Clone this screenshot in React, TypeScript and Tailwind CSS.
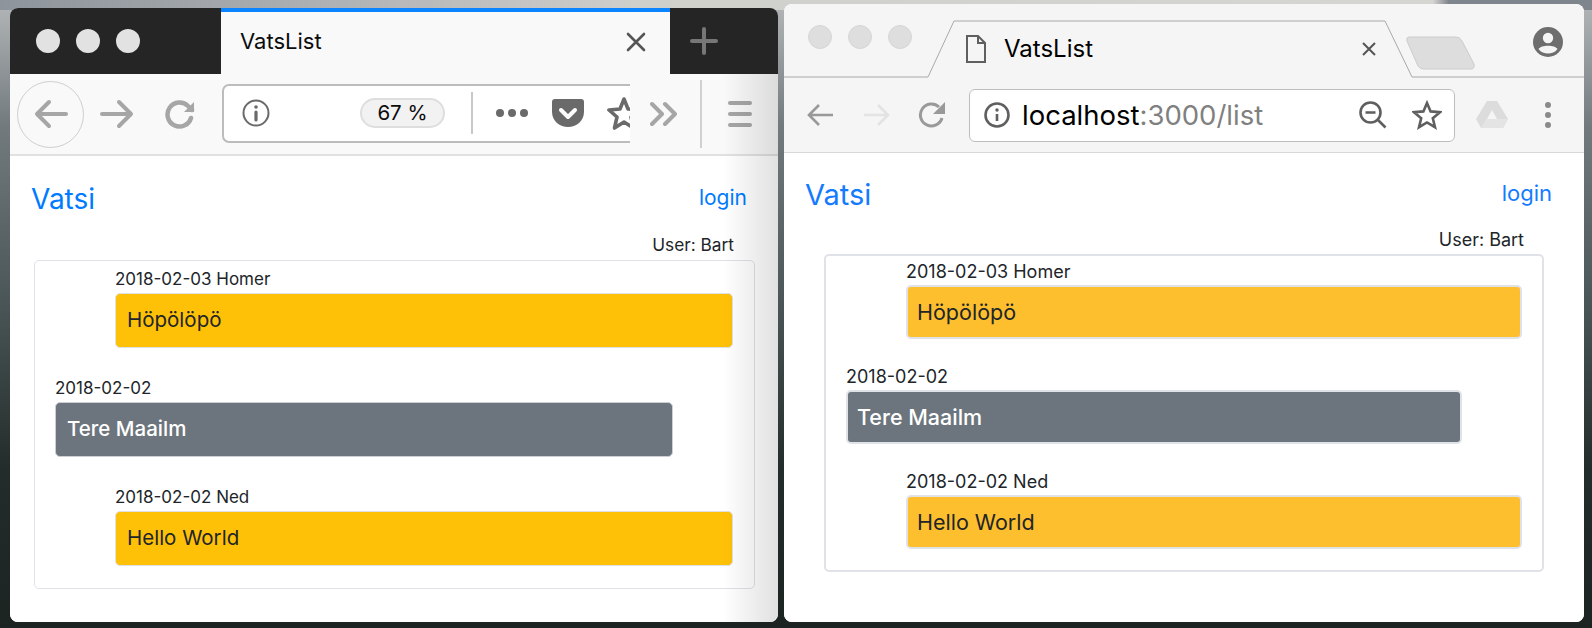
import React from "react";

const FONT = "[font-family:Inter,'Liberation_Sans',sans-serif]";

function Row({ label, text, kind }: { label: string; text: string; kind: string }) {
  const styles: Record<string, { wrap: string; label: string; box: string }> = {
    ffOwn: { wrap: "self-start ml-[60px] w-[618px]", label: "text-[17px] h-[27px]", box: "h-[55px] bg-[#ffc107] border-[#dfe1e6] border text-[#212529] text-[20.5px] px-[11px]" },
    ffOther: { wrap: "self-start w-[618px]", label: "text-[17px] h-[27px]", box: "h-[55px] bg-[#6c757d] border-[#ccd0d5] border text-white text-[20.5px] px-[11px] font-medium" },
    gcOwn: { wrap: "self-start ml-[60px] w-[616px]", label: "text-[18px] h-[26px]", box: "h-[54px] bg-[#fdbf2d] border-[#dfe2e7] border-2 text-[#212529] text-[21.5px] px-[9px]" },
    gcOther: { wrap: "self-start w-[616px]", label: "text-[18px] h-[26px]", box: "h-[54px] bg-[#6c757d] border-[#dfe2e7] border-2 text-white text-[21.5px] px-[9px] font-medium" },
  };
  const s = styles[kind];
  return (
    <div className={s.wrap}>
      <div className={`${s.label} leading-[26px] text-[#212529] whitespace-nowrap`}>{label}</div>
      <div className={`${s.box} flex items-center rounded-[5px]`}>{text}</div>
    </div>
  );
}

function FirefoxWindow() {
  return (
    <div className="relative w-[768px] h-[614px] mt-[8px] flex-none flex flex-col rounded-[8px] overflow-hidden bg-white">
      {/* tab strip */}
      <div className="flex h-[66px] flex-none bg-[#252525]">
        <div className="w-[211px] flex-none flex items-center gap-[16px] pl-[26px]">
          <span className="w-[24px] h-[24px] rounded-full bg-[#e2e2e2]" />
          <span className="w-[24px] h-[24px] rounded-full bg-[#e2e2e2]" />
          <span className="w-[24px] h-[24px] rounded-full bg-[#e2e2e2]" />
        </div>
        <div className="w-[449px] flex-none flex items-center justify-between bg-[#f9f9fa] border-t-[4px] border-[#0a84ff] pl-[19px] pr-[24px] pb-[3px]">
          <span className="text-[22px] text-[#0c0c0d]">VatsList</span>
          <svg width="20" height="20" viewBox="0 0 20 20" fill="none" stroke="#555" strokeWidth="2.6" strokeLinecap="round">
            <path d="M2 2 L18 18 M18 2 L2 18" />
          </svg>
        </div>
        <div className="flex-1 flex items-center pl-[20px]">
          <svg width="28" height="28" viewBox="0 0 28 28" fill="none" stroke="#777" strokeWidth="4" strokeLinecap="round">
            <path d="M14 2 V26 M2 14 H26" />
          </svg>
        </div>
      </div>
      {/* toolbar */}
      <div className="relative flex-none h-[82px] flex items-center bg-[#f9f9fa] border-b-2 border-[#e1e1e2] overflow-hidden pl-[7px]">
        <div className="w-[67px] h-[67px] flex-none rounded-full border-[1.5px] border-[#cfcfcf] flex items-center justify-center">
          <svg width="34" height="30" viewBox="0 0 34 30" fill="none" stroke="#a6a6a6" strokeWidth="4" strokeLinecap="round" strokeLinejoin="round">
            <path d="M32 15 H3 M15 3 L3 15 L15 27" />
          </svg>
        </div>
        <svg className="ml-[16px] flex-none" width="34" height="30" viewBox="0 0 34 30" fill="none" stroke="#a6a6a6" strokeWidth="4" strokeLinecap="round" strokeLinejoin="round">
          <path d="M2 15 H31 M19 3 L31 15 L19 27" />
        </svg>
        <svg className="ml-[30px] flex-none" width="32" height="30" viewBox="0 0 32 30" fill="none" stroke="#a6a6a6" strokeWidth="4.5" strokeLinecap="round" strokeLinejoin="round">
          <path d="M27 19 A12 12 0 1 1 24 7 L28 11" />
          <path d="M30 3 V13 H20 Z" fill="#a6a6a6" stroke="none" />
        </svg>
        <div className="ml-[26px] mb-[2px] h-[59px] w-[500px] flex-none flex items-center bg-white border-2 border-[#bcbcbc] rounded-[7px] pl-[18px]">
          <svg className="flex-none" width="28" height="28" viewBox="0 0 28 28" fill="none" stroke="#6a6a6a">
            <circle cx="14" cy="14" r="12.5" strokeWidth="2" />
            <path d="M14 13 V21" strokeWidth="3.2" strokeLinecap="round" />
            <circle cx="14" cy="8" r="1.8" fill="#6a6a6a" stroke="none" />
          </svg>
          <div className="ml-[90px] w-[85px] h-[30px] flex-none flex items-center justify-center rounded-full bg-[#f2f2f2] border-2 border-[#dedede] text-[20.5px] text-[#0c0c0d]">67 %</div>
          <div className="ml-[26px] w-[2px] h-[42px] flex-none bg-[#c8c8c8]" />
          <div className="ml-[23px] flex flex-none gap-[4px]">
            <span className="w-[8px] h-[8px] rounded-full bg-[#6a6a6a]" />
            <span className="w-[8px] h-[8px] rounded-full bg-[#6a6a6a]" />
            <span className="w-[8px] h-[8px] rounded-full bg-[#6a6a6a]" />
          </div>
          <svg className="ml-[24px] flex-none" width="32" height="28" viewBox="0 0 32 28">
            <path d="M3 0 H29 A3 3 0 0 1 32 3 V13 C32 22 24 28 16 28 C8 28 0 22 0 13 V3 A3 3 0 0 1 3 0 Z" fill="#6a6a6a" />
            <path d="M9 11 L16 18 L23 11" fill="none" stroke="#fff" strokeWidth="4" strokeLinecap="round" strokeLinejoin="round" />
          </svg>
          <svg className="ml-[22px] flex-none" width="36" height="34" viewBox="0 0 36 34" fill="none" stroke="#6a6a6a" strokeWidth="3.6" strokeLinejoin="round">
            <path d="M18 3 L22 13 L33 14 L25 21 L27.5 32 L18 26 L8.5 32 L11 21 L3 14 L14 13 Z" />
          </svg>
        </div>
        {/* overflow panel over the url bar */}
        <div className="absolute right-0 top-0 bottom-0 w-[148px] flex items-center bg-[#f9f9fa]">
          <svg className="ml-[20px] flex-none" width="28" height="26" viewBox="0 0 28 26" fill="none" stroke="#a6a6a6" strokeWidth="4" strokeLinecap="round" strokeLinejoin="round">
            <path d="M2 3 L12 13 L2 23 M15 3 L25 13 L15 23" />
          </svg>
          <div className="ml-[22px] w-[2px] h-[68px] flex-none bg-[#d0d0d0]" />
          <div className="ml-[26px] flex flex-col gap-[7px] flex-none">
            <span className="w-[24px] h-[4px] rounded-full bg-[#a6a6a6]" />
            <span className="w-[24px] h-[4px] rounded-full bg-[#a6a6a6]" />
            <span className="w-[24px] h-[4px] rounded-full bg-[#a6a6a6]" />
          </div>
        </div>
      </div>
      {/* page */}
      <div className="flex-1 flex flex-col bg-white">
        <div className="flex items-start justify-between pl-[21px] pr-[31px] pt-[24px]">
          <span className="text-[28px] leading-[38px] text-[#007bff]">Vatsi</span>
          <span className="text-[21px] leading-[36px] text-[#007bff]">login</span>
        </div>
        <div className="mt-[15px] pr-[44px] text-right text-[17.3px] leading-[24px] text-[#212529]">User: Bart</div>
        <div className="mx-[24px] mt-[3px] w-[721px] h-[329px] flex flex-col gap-[27px] border border-[#dfe1e6] rounded-[5px] pl-[20px] pt-[5px]">
          <Row kind="ffOwn" label="2018-02-03 Homer" text="Höpölöpö" />
          <Row kind="ffOther" label="2018-02-02" text="Tere Maailm" />
          <Row kind="ffOwn" label="2018-02-02 Ned" text="Hello World" />
        </div>
      </div>
      {/* right edge shade */}
      <div className="absolute right-0 top-[66px] bottom-0 w-[55px] pointer-events-none bg-gradient-to-r from-transparent to-black/12" />
    </div>
  );
}

function ChromeWindow() {
  return (
    <div className="w-[800px] h-[618px] mt-[4px] ml-[6px] flex-none flex flex-col rounded-[8px] overflow-hidden bg-white">
      {/* tab strip */}
      <div className="relative flex-none h-[74px] flex items-center bg-[#f5f5f5] pb-[2px]">
        <svg className="absolute left-0 top-0" width="800" height="74" fill="none">
          <path d="M0 73 H144 L170 17 H601 L628 73 H800" stroke="#a9a9a9" strokeWidth="1" />
          <path d="M625 33 H672 Q676 33 678 37 L690 60 Q691 65 687 65 H639 Q636 65 634 62 L623 37 Q622 33 625 33 Z" fill="#dddddd" stroke="#cccccc" />
        </svg>
        <div className="relative flex items-center gap-[16px] pl-[24px] pb-[6px]">
          <span className="w-[24px] h-[24px] rounded-full bg-[#dedede] border border-[#d6d6d6]" />
          <span className="w-[24px] h-[24px] rounded-full bg-[#dedede] border border-[#d6d6d6]" />
          <span className="w-[24px] h-[24px] rounded-full bg-[#dedede] border border-[#d6d6d6]" />
        </div>
        <div className="relative ml-[54px] mt-[18px] flex items-center">
          <svg className="flex-none" width="20" height="28" viewBox="0 0 20 28" fill="none" stroke="#5f5f5f" strokeWidth="2">
            <path d="M1 1 H12 L19 8 V27 H1 Z M12 1 V8 H19" />
          </svg>
          <span className="ml-[18px] w-[358px] flex-none text-[24px] leading-[28px] text-black">VatsList</span>
          <svg className="flex-none" width="14" height="14" viewBox="0 0 14 14" fill="none" stroke="#555" strokeWidth="2">
            <path d="M1 1 L13 13 M13 1 L1 13" />
          </svg>
        </div>
        <svg className="absolute left-[749px] top-[23px]" width="30" height="30" viewBox="0 0 30 30">
          <circle cx="15" cy="15" r="15" fill="#6e6e6e" />
          <circle cx="15" cy="11" r="5.2" fill="#f5f5f5" />
          <path d="M5.5 22 C8 17.5 22 17.5 24.5 22 C22 25.5 18.5 26.5 15 26.5 C11.5 26.5 8 25.5 5.5 22 Z" fill="#f5f5f5" />
        </svg>
      </div>
      {/* toolbar */}
      <div className="flex-none h-[75px] flex items-center bg-[#f5f5f5] border-b border-[#d8d8d8] pl-[23px]">
        <svg className="flex-none" width="26" height="24" viewBox="0 0 26 24" fill="none" stroke="#999" strokeWidth="2.6">
          <path d="M26 12 H2 M12 2 L2 12 L12 22" />
        </svg>
        <svg className="ml-[31px] flex-none" width="26" height="24" viewBox="0 0 26 24" fill="none" stroke="#e3e3e3" strokeWidth="2.6">
          <path d="M0 12 H24 M14 2 L24 12 L14 22" />
        </svg>
        <svg className="ml-[28px] flex-none" width="28" height="28" viewBox="0 0 28 28" fill="none" stroke="#999" strokeWidth="3">
          <path d="M24 17 A11 11 0 1 1 21 6" />
          <path d="M27 1 V13 H15 Z" fill="#999" stroke="none" />
        </svg>
        <div className="ml-[23px] h-[53px] w-[486px] flex-none flex items-center bg-white border border-[#bdbdbd] rounded-[6px] pl-[14px]">
          <svg className="flex-none" width="26" height="26" viewBox="0 0 26 26" fill="none" stroke="#5f5f5f">
            <circle cx="13" cy="13" r="11.5" strokeWidth="2.6" />
            <path d="M13 12 V19" strokeWidth="2.6" />
            <circle cx="13" cy="8" r="1.7" fill="#5f5f5f" stroke="none" />
          </svg>
          <span className="ml-[12px] w-[335px] flex-none text-[27.5px] leading-[30px] text-black whitespace-nowrap">
            localhost<span className="text-[#808080]">:3000/list</span>
          </span>
          <svg className="flex-none ml-[2px]" width="28" height="28" viewBox="0 0 28 28" fill="none" stroke="#5f5f5f" strokeWidth="2.6">
            <circle cx="11.5" cy="11.5" r="10" />
            <path d="M6.5 11.5 H16.5 M18.5 18.5 L26.5 26.5" />
          </svg>
          <svg className="ml-[25px] flex-none" width="30" height="30" viewBox="0 0 30 30" fill="none" stroke="#5f5f5f" strokeWidth="2.6" strokeLinejoin="miter">
            <path d="M15 3 L18.6 11.4 L28 12.2 L20.8 18.2 L23 27.2 L15 22.4 L7 27.2 L9.2 18.2 L2 12.2 L11.4 11.4 Z" />
          </svg>
        </div>
        <svg className="ml-[21px] flex-none" width="32" height="28" viewBox="0 0 32 28">
          <path d="M11 0 H21 L32 18 L27 27 H5 L0 18 Z" fill="#dcdcdc" />
          <path d="M5 27 L10 18 H32 L27 27 Z" fill="#e4e4e4" />
          <path d="M16 9 L11 18 H21 Z" fill="#f5f5f5" />
        </svg>
        <div className="ml-[37px] flex flex-col gap-[4px] flex-none">
          <span className="w-[6px] h-[6px] rounded-full bg-[#8a8a8a]" />
          <span className="w-[6px] h-[6px] rounded-full bg-[#8a8a8a]" />
          <span className="w-[6px] h-[6px] rounded-full bg-[#8a8a8a]" />
        </div>
      </div>
      {/* page */}
      <div className="flex-1 flex flex-col bg-white">
        <div className="flex items-start justify-between pl-[21px] pr-[32px] pt-[23px]">
          <span className="text-[29px] leading-[38px] text-[#147bff]">Vatsi</span>
          <span className="text-[22px] leading-[34px] text-[#147bff]">login</span>
        </div>
        <div className="mt-[14px] pr-[60px] text-right text-[18px] leading-[24px] text-[#212529]">User: Bart</div>
        <div className="ml-[40px] mt-[2px] w-[720px] h-[318px] flex flex-col gap-[25px] border-2 border-[#dfe2e7] rounded-[5px] pl-[20px] pt-[3px]">
          <Row kind="gcOwn" label="2018-02-03 Homer" text="Höpölöpö" />
          <Row kind="gcOther" label="2018-02-02" text="Tere Maailm" />
          <Row kind="gcOwn" label="2018-02-02 Ned" text="Hello World" />
        </div>
      </div>
    </div>
  );
}

export default function App() {
  return (
    <div className={`${FONT} w-[1592px] h-[628px] overflow-hidden flex pl-[10px] items-start [background:linear-gradient(90deg,#8d949b_0%,#a5a9ac_15%,#cfcfcc_40%,#d5d5d1_90%,#7e858c_91%,#7e858c_100%)_0_0/100%_10px_no-repeat,linear-gradient(180deg,#b4b7b8_0%,#727a7e_20%,#4f5a5c_45%,#222c2a_75%,#1c2422_100%)]`}>
      <FirefoxWindow />
      <ChromeWindow />
    </div>
  );
}
